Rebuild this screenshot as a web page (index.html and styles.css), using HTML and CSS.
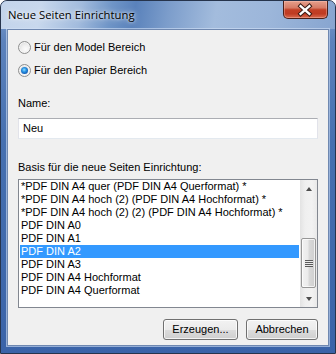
FILE: index.html
```html
<!DOCTYPE html>
<html>
<head>
<meta charset="utf-8">
<link rel="stylesheet" href="styles.css">
</head>
<body>
<div class="window">
  <div class="titlebar">
    <span class="title">Neue Seiten Einrichtung</span>
    <div class="close">
      <svg width="45" height="18" viewBox="0 0 45 18">
        <path d="M18 5 L27 13 M27 5 L18 13" stroke="#3a1c16" stroke-width="4.4" fill="none" stroke-linecap="square"/>
        <path d="M18 5 L27 13 M27 5 L18 13" stroke="#ffffff" stroke-width="2.4" fill="none" stroke-linecap="square"/>
      </svg>
    </div>
  </div>
  <div class="frame">
    <div class="client">
      <div class="radios">
        <div class="radio"><span class="circle"></span><span>Für den Model Bereich</span></div>
        <div class="radio"><span class="circle checked"><span class="dot"></span></span><span>Für den Papier Bereich</span></div>
      </div>
      <div class="label name-label">Name:</div>
      <div class="input">Neu</div>
      <div class="label basis-label">Basis für die neue Seiten Einrichtung:</div>
      <div class="listbox">
        <div class="items">
          <div class="item">*PDF DIN A4 quer (PDF DIN A4 Querformat) *</div>
          <div class="item">*PDF DIN A4 hoch (2) (PDF DIN A4 Hochformat) *</div>
          <div class="item">*PDF DIN A4 hoch (2) (2) (PDF DIN A4 Hochformat) *</div>
          <div class="item">PDF DIN A0</div>
          <div class="item">PDF DIN A1</div>
          <div class="item selected">PDF DIN A2</div>
          <div class="item">PDF DIN A3</div>
          <div class="item">PDF DIN A4 Hochformat</div>
          <div class="item">PDF DIN A4 Querformat</div>
        </div>
        <div class="scrollbar">
          <div class="sbtn"><span class="arrow up"></span></div>
          <div class="track">
            <div class="thumb"><span class="grip"></span></div>
          </div>
          <div class="sbtn"><span class="arrow down"></span></div>
        </div>
      </div>
      <div class="buttons">
        <div class="button b1">Erzeugen...</div>
        <div class="button b2">Abbrechen</div>
      </div>
    </div>
  </div>
</div>
</body>
</html>
```
FILE: styles.css
```css
html, body {
  margin: 0;
  padding: 0;
  background: #ffffff;
}

.window {
  width: 336px;
  height: 354px;
  box-sizing: border-box;
  border: 1px solid #26344c;
  border-radius: 7px 7px 0 0;
  background: linear-gradient(to bottom, #7f9fcd 0px, #5c82bc 40px, #4670b0 140px, #3a63a8 354px);
  display: flex;
  flex-direction: column;
  overflow: hidden;
}

.titlebar {
  height: 28px;
  flex: none;
  display: flex;
  justify-content: space-between;
  align-items: flex-start;
  padding-left: 7px;
  background: linear-gradient(100deg,
    #c3d4eb 0%,
    #c8d8ed 12%,
    #a2bbdd 24%,
    #6f95c7 33%,
    #5a82bb 40%,
    #7c9dcb 50%,
    #a3bcdd 64%,
    #9cb6da 80%,
    #87a5d0 100%);
}

.title {
  font-family: "Open Sans", "Liberation Sans", sans-serif;
  font-size: 11.3px;
  line-height: 28px;
  color: #000;
  text-shadow: 0 0 6px rgba(255,255,255,0.9), 0 0 3px rgba(255,255,255,0.8);
}

.close {
  width: 45px;
  height: 18px;
  margin-right: 7px;
  box-sizing: border-box;
  border: 1px solid #4a1f18;
  border-top: none;
  border-radius: 0 0 5px 5px;
  background: linear-gradient(to bottom, #e6a08c 0%, #d67b66 40%, #c23f25 52%, #bf3b22 75%, #da6c50 100%);
  box-shadow: inset 0 0 0 1px rgba(255,210,200,0.35);
  display: flex;
}

.close svg {
  display: block;
  margin-left: -1px;
}

.frame {
  flex: 1;
  display: flex;
  padding: 0 6px 7px 6px;
}

.client {
  flex: 1;
  border: 1px solid #6f88b0;
  box-shadow: 0 0 0 1px rgba(210,225,246,0.6);
  background: #f0f0f0;
  padding: 11px 10px 0 10px;
  display: flex;
  flex-direction: column;
  font-family: "Liberation Sans", Arial, sans-serif;
  font-size: 11px;
  color: #000;
}

.radios {
  display: flex;
  flex-direction: column;
  gap: 10px;
}

.radio {
  height: 13px;
  display: flex;
  align-items: center;
  gap: 2px;
  line-height: 13px;
}

.circle {
  width: 13px;
  height: 13px;
  box-sizing: border-box;
  border-radius: 50%;
  border: 1px solid #8e8f8f;
  background: radial-gradient(circle at 60% 65%, #fbfbfb 0%, #f0f0f0 40%, #d3d3d3 100%);
  box-shadow: inset 0 0 0 1px #f4f4f4;
  display: flex;
  align-items: center;
  justify-content: center;
  flex: none;
  margin-right: 1px;
}

.dot {
  width: 7px;
  height: 7px;
  border-radius: 50%;
  background: radial-gradient(circle at 45% 40%, #8fe0ff 0%, #2b95e4 35%, #145fb8 70%, #0b3570 100%);
}

.label {
  line-height: 13px;
  height: 13px;
}

.name-label {
  margin-top: 20px;
}

.input {
  margin-top: 8px;
  height: 21px;
  box-sizing: border-box;
  background: #ffffff;
  border: 1px solid #e2e3ea;
  border-top-color: #abadb3;
  border-bottom-color: #e3e9ef;
  padding-left: 4px;
  line-height: 19px;
}

.basis-label {
  margin-top: 22px;
}

.listbox {
  margin-top: 5px;
  height: 129px;
  box-sizing: border-box;
  border: 1px solid #828790;
  background: #ffffff;
  display: flex;
}

.items {
  flex: 1;
  padding: 0 1px;
  overflow: hidden;
}

.item {
  height: 13px;
  line-height: 13px;
  padding-left: 1px;
  white-space: nowrap;
}

.item.selected {
  background: #3399ff;
  color: #ffffff;
}

.scrollbar {
  width: 17px;
  flex: none;
  display: flex;
  flex-direction: column;
  background: linear-gradient(to right, #e3e3e3 0%, #efefef 30%, #f2f2f2 70%, #e9e9e9 100%);
}

.sbtn {
  height: 17px;
  flex: none;
  display: flex;
  align-items: center;
  justify-content: center;
}

.arrow {
  width: 0;
  height: 0;
  border-left: 3.5px solid transparent;
  border-right: 3.5px solid transparent;
}

.arrow.up {
  border-bottom: 4px solid #4d4d4d;
}

.arrow.down {
  border-top: 4px solid #4d4d4d;
}

.track {
  flex: 1;
  padding-top: 41px;
  display: flex;
  flex-direction: column;
  align-items: center;
}

.thumb {
  width: 15px;
  height: 50px;
  box-sizing: border-box;
  border: 1px solid #979797;
  border-radius: 2px;
  background: linear-gradient(to right, #f2f2f2 0%, #ebebeb 45%, #d9d9d9 55%, #cfcfcf 100%);
  box-shadow: inset 0 0 0 1px rgba(255,255,255,0.7);
  display: flex;
  align-items: center;
  justify-content: center;
}

.grip {
  width: 8px;
  height: 7px;
  background: repeating-linear-gradient(to bottom, #5a5a5a 0px, #5a5a5a 1px, #e8e8e8 1px, #e8e8e8 2px);
}

.buttons {
  margin-top: 11px;
  display: flex;
  justify-content: flex-end;
  gap: 8px;
}

.button {
  height: 21px;
  box-sizing: border-box;
  border: 1px solid #707070;
  border-radius: 3px;
  background: linear-gradient(to bottom, #f2f2f2 0%, #ebebeb 50%, #dddddd 51%, #cfcfcf 100%);
  box-shadow: inset 0 0 0 1px rgba(255,255,255,0.75);
  display: flex;
  align-items: center;
  justify-content: center;
  line-height: 19px;
}

.b1 {
  width: 75px;
}

.b2 {
  width: 72px;
}
```
